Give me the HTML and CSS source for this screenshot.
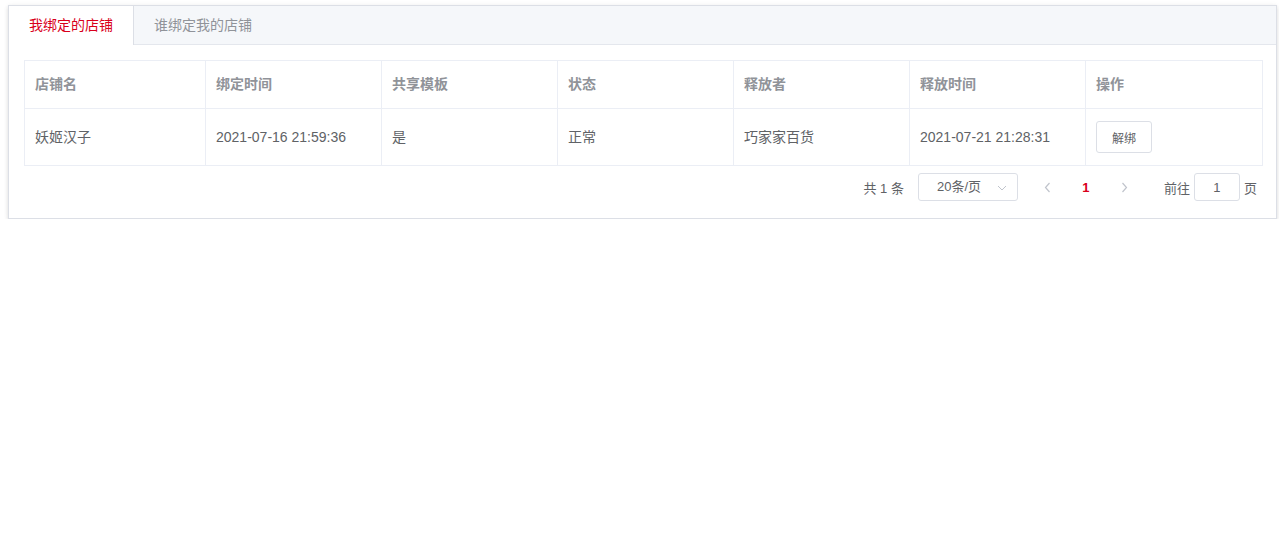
FILE: index.html
```html
<!DOCTYPE html>
<html lang="zh-CN">
<head>
    <meta charset="UTF-8">
    <title>店铺绑定</title>
    <link rel="stylesheet" href="styles.css">
</head>
<body>
    <div class="page">
        <div class="tabs-card">
            <div class="tabs-header">
                <div class="tab-item active">我绑定的店铺</div>
                <div class="tab-item">谁绑定我的店铺</div>
            </div>
            <div class="tabs-content">
                <table class="shop-table">
                    <colgroup>
                        <col style="width:181px">
                        <col style="width:176px">
                        <col style="width:176px">
                        <col style="width:176px">
                        <col style="width:176px">
                        <col style="width:176px">
                        <col style="width:177px">
                    </colgroup>
                    <thead>
                        <tr>
                            <th>店铺名</th>
                            <th>绑定时间</th>
                            <th>共享模板</th>
                            <th>状态</th>
                            <th>释放者</th>
                            <th>释放时间</th>
                            <th>操作</th>
                        </tr>
                    </thead>
                    <tbody>
                        <tr>
                            <td>妖姬汉子</td>
                            <td>2021-07-16 21:59:36</td>
                            <td>是</td>
                            <td>正常</td>
                            <td>巧家家百货</td>
                            <td>2021-07-21 21:28:31</td>
                            <td><button class="btn-small">解绑</button></td>
                        </tr>
                    </tbody>
                </table>

                <div class="pagination">
                    <span class="total">共 1 条</span>
                    <div class="size-select">
                        <span>20条/页</span>
                        <svg class="select-arrow" width="10" height="6" viewBox="0 0 10 6">
                            <path d="M1 1 L5 5 L9 1" fill="none" stroke="#c0c4cc" stroke-width="1"/>
                        </svg>
                    </div>
                    <span class="pg-btn prev">
                        <svg width="7" height="11" viewBox="0 0 7 11">
                            <path d="M5.5 1 L1.5 5.5 L5.5 10" fill="none" stroke="#c0c4cc" stroke-width="1.2"/>
                        </svg>
                    </span>
                    <span class="pg-num current">1</span>
                    <span class="pg-btn next">
                        <svg width="7" height="11" viewBox="0 0 7 11">
                            <path d="M1.5 1 L5.5 5.5 L1.5 10" fill="none" stroke="#c0c4cc" stroke-width="1.2"/>
                        </svg>
                    </span>
                    <span class="jump">前往</span>
                    <input class="jump-input" type="text" value="1">
                    <span class="jump-unit">页</span>
                </div>
            </div>
        </div>
    </div>
</body>
</html>
```

FILE: styles.css
```css
body {
    margin: 0;
    font-family: "Liberation Sans", "Noto Sans CJK SC", sans-serif;
    color: #606266;
    background: #fff;
}
.page {
    padding: 5px 2px 0 8px;
}
.tabs-card {
    background: #fff;
    border: 1px solid #dcdfe6;
    box-shadow: 0 2px 4px 0 rgba(0,0,0,0.12), 0 0 6px 0 rgba(0,0,0,0.04);
}
.tabs-header {
    display: flex;
    height: 38px;
    background: #f5f7fa;
    border-bottom: 1px solid #e4e7ed;
}
.tab-item {
    height: 38px;
    line-height: 39px;
    padding: 0 20px;
    font-size: 14px;
    color: #909399;
    border-right: 1px solid transparent;
}
.tab-item.active {
    height: 39px;
    background: #fff;
    color: #d9001b;
    border-right-color: #dcdfe6;
}
.tabs-content {
    padding: 15px;
}
.shop-table {
    width: 100%;
    table-layout: fixed;
    border-collapse: collapse;
    font-size: 14px;
}
.shop-table th,
.shop-table td {
    border: 1px solid #ebeef5;
    padding: 12px 10px;
    line-height: 23px;
    text-align: left;
    vertical-align: middle;
}
.shop-table th {
    color: #909399;
    font-weight: bold;
}
.shop-table td {
    color: #606266;
}
.btn-small {
    height: 32px;
    padding: 0 15px;
    font-size: 12px;
    font-family: inherit;
    color: #606266;
    background: #fff;
    border: 1px solid #dcdfe6;
    border-radius: 3px;
    cursor: pointer;
}
.pagination {
    display: flex;
    justify-content: flex-end;
    align-items: center;
    margin-top: 5px;
    padding: 2px 4px 2px 5px;
    font-size: 13px;
    color: #606266;
    height: 28px;
}
.total {
    margin-right: 14px;
}
.size-select {
    position: relative;
    box-sizing: border-box;
    width: 100px;
    height: 28px;
    line-height: 26px;
    padding-left: 18px;
    border: 1px solid #dcdfe6;
    border-radius: 3px;
}
.select-arrow {
    position: absolute;
    right: 10px;
    top: 11px;
}
.pg-btn,
.pg-num {
    display: flex;
    align-items: center;
    justify-content: center;
    width: 36px;
    height: 28px;
}
.prev {
    margin-left: 12px;
}
.pg-num {
    margin-left: 2px;
    font-weight: bold;
}
.pg-num.current {
    color: #d9001b;
}
.next {
    margin-left: 3px;
}
.jump {
    margin-left: 21px;
}
.jump-input {
    box-sizing: border-box;
    width: 46px;
    height: 28px;
    margin: 0 4px;
    padding: 0;
    border: 1px solid #dcdfe6;
    border-radius: 3px;
    text-align: center;
    font-size: 13px;
    font-family: inherit;
    color: #606266;
}
```
